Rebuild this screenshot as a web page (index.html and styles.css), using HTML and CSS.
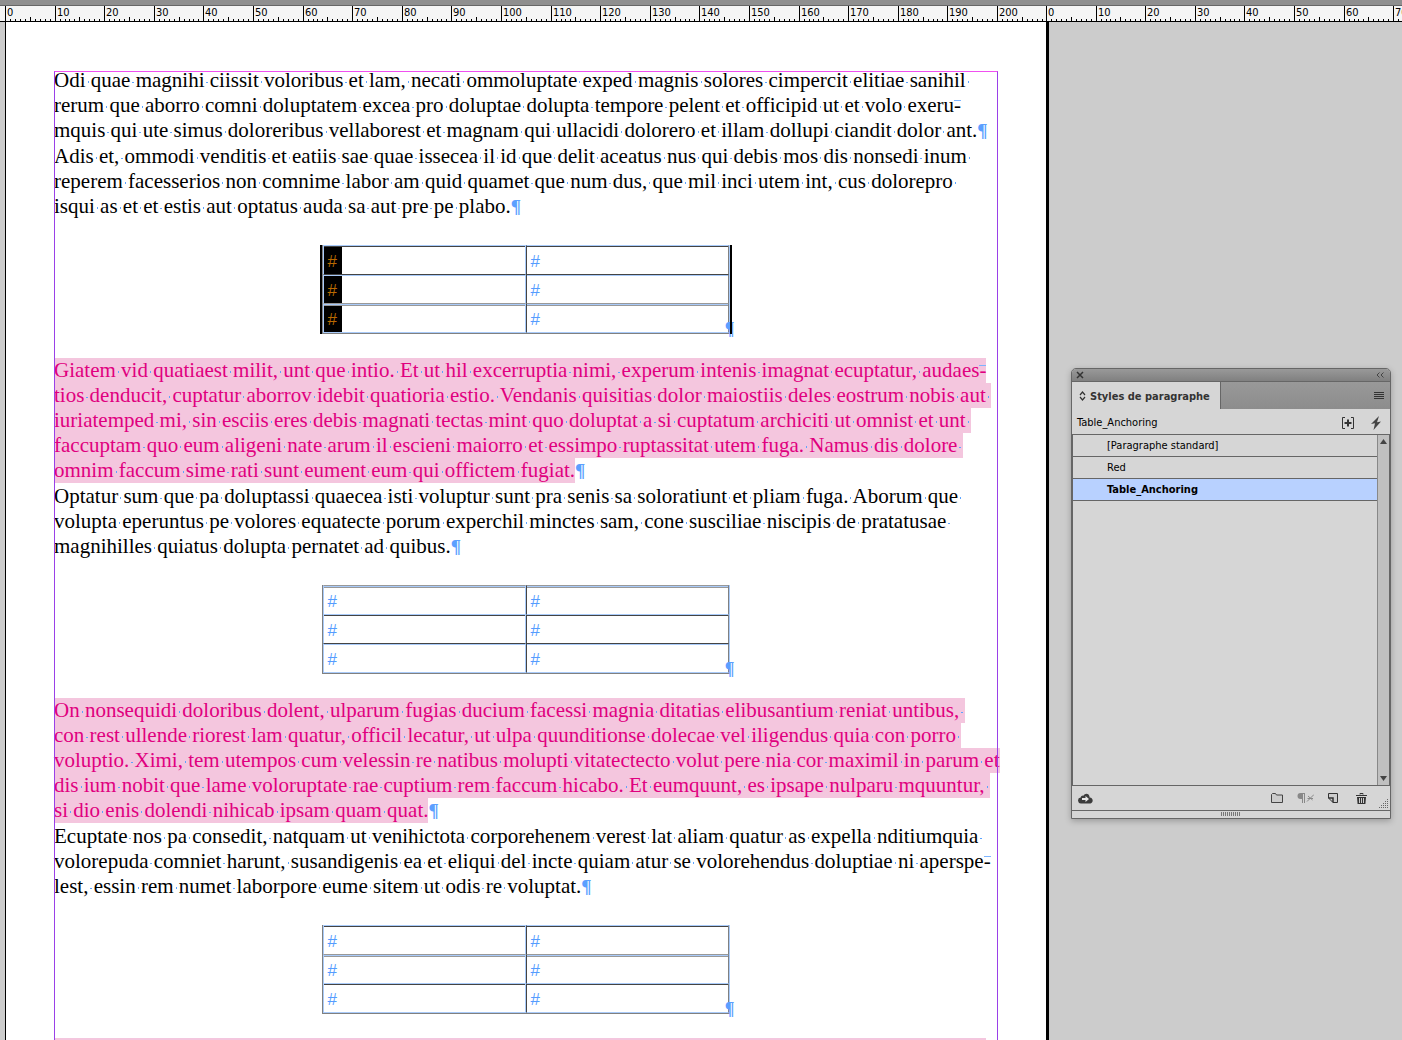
FILE: index.html
```html
<!DOCTYPE html>
<html lang="fr">
<head>
<meta charset="utf-8">
<title>Styles de paragraphe</title>
<link rel="stylesheet" href="styles.css">
</head>
<body>
<header class="ruler"><svg id="ruler" class="ruler-scale" role="img" aria-label="Horizontal ruler"></svg></header>
<main class="workspace">
<article class="page">
<div class="frame">
<div class="story">
<p>Odi quae magnihi ciissit voloribus et lam, necati ommoluptate exped magnis solores cimpercit elitiae sanihil 
rerum que aborro comni doluptatem excea pro doluptae dolupta tempore pelent et officipid ut et volo exeru<span class="hyphen">-</span>
mquis qui ute simus doloreribus vellaborest et magnam qui ullacidi dolorero et illam dollupi ciandit dolor ant.<span class="pilcrow">¶</span></p>
<p>Adis et, ommodi venditis et eatiis sae quae issecea il id que delit aceatus nus qui debis mos dis nonsedi inum 
reperem facesserios non comnime labor am quid quamet que num dus, que mil inci utem int, cus dolorepro 
isqui as et et estis aut optatus auda sa aut pre pe plabo.<span class="pilcrow">¶</span></p>
<div class="anchor selected">
<table class="grid">
<tr class="rule-blue"><td><span class="mark">#</span></td><td><span class="mark">#</span></td></tr>
<tr class="rule-dark"><td><span class="mark">#</span></td><td><span class="mark">#</span></td></tr>
<tr class="rule-soft"><td><span class="mark">#</span></td><td><span class="mark">#</span></td></tr>
</table><span class="table-end">¶</span>
</div>
<p class="red"><span class="tint">Giatem vid quatiaest milit, unt que intio. Et ut hil excerruptia nimi, experum intenis imagnat ecuptatur, audaes<span class="hyphen">-</span>
tios denducit, cuptatur aborrov idebit quatioria estio. Vendanis quisitias dolor maiostiis deles eostrum nobis aut 
iuriatemped mi, sin esciis eres debis magnati tectas mint quo doluptat a si cuptatum archiciti ut omnist et unt 
faccuptam quo eum aligeni nate arum il escieni maiorro et essimpo ruptassitat utem fuga. Namus dis dolore 
omnim faccum sime rati sunt eument eum qui offictem fugiat.</span><span class="pilcrow">¶</span></p>
<p>Optatur sum que pa doluptassi quaecea isti voluptur sunt pra senis sa soloratiunt et pliam fuga. Aborum que 
volupta eperuntus pe volores equatecte porum experchil minctes sam, cone susciliae niscipis de pratatusae 
magnihilles quiatus dolupta pernatet ad quibus.<span class="pilcrow">¶</span></p>
<div class="anchor">
<table class="grid">
<tr class="rule-soft"><td><span class="mark">#</span></td><td><span class="mark">#</span></td></tr>
<tr class="rule-blue"><td><span class="mark">#</span></td><td><span class="mark">#</span></td></tr>
<tr class="rule-dark"><td><span class="mark">#</span></td><td><span class="mark">#</span></td></tr>
</table><span class="table-end">¶</span>
</div>
<p class="red"><span class="tint">On nonsequidi doloribus dolent, ulparum fugias ducium facessi magnia ditatias elibusantium reniat untibus, 
con rest ullende riorest lam quatur, officil lecatur, ut ulpa quunditionse dolecae vel iligendus quia con porro 
voluptio. Ximi, tem utempos cum velessin re natibus molupti vitatectecto volut pere nia cor maximil in parum et
dis ium nobit que lame voloruptate rae cuptium rem faccum hicabo. Et eumquunt, es ipsape nulparu mquuntur, 
si dio enis dolendi nihicab ipsam quam quat.</span><span class="pilcrow">¶</span></p>
<p>Ecuptate nos pa consedit, natquam ut venihictota corporehenem verest lat aliam quatur as expella nditiumquia 
volorepuda comniet harunt, susandigenis ea et eliqui del incte quiam atur se volorehendus doluptiae ni aperspe<span class="hyphen">-</span>
lest, essin rem numet laborpore eume sitem ut odis re voluptat.<span class="pilcrow">¶</span></p>
<div class="anchor">
<table class="grid">
<tr class="rule-blue"><td><span class="mark">#</span></td><td><span class="mark">#</span></td></tr>
<tr class="rule-soft"><td><span class="mark">#</span></td><td><span class="mark">#</span></td></tr>
<tr class="rule-blue"><td><span class="mark">#</span></td><td><span class="mark">#</span></td></tr>
</table><span class="table-end">¶</span>
</div>
<div class="next-paragraph"></div>
</div>
</div>
</article>
<aside class="pasteboard">
<section class="panel" aria-label="Styles de paragraphe">
<div class="titlebar">
<button class="icon" aria-label="Fermer"><svg width="8" height="8" viewBox="0 0 8 8"><path d="M1 1l6 6M7 1l-6 6" stroke="#333" stroke-width="1.5"/></svg></button>
<button class="icon" aria-label="Réduire"><svg width="8" height="6" viewBox="0 0 8 6"><path d="M3.500.5L1 3l2.500 2.500M7.500.5L5 3l2.500 2.500" fill="none" stroke="#444"/></svg></button>
</div>
<div class="tabs">
<button class="tab"><svg width="7" height="10" viewBox="0 0 7 10"><path d="M1 4l2.500-3L6 4M1 6l2.500 3L6 6" fill="none" stroke="#333" stroke-width="1.200"/></svg>Styles de paragraphe</button>
<button class="icon" aria-label="Menu du panneau"><svg width="10" height="7" viewBox="0 0 10 7" shape-rendering="crispEdges"><path d="M0 .5h10M0 2.500h10M0 4.500h10M0 6.500h10" stroke="#333"/></svg></button>
</div>
<div class="current">
<span>Table_Anchoring</span>
<div class="tools">
<button class="icon" aria-label="Effacer les remplacements"><svg width="12" height="12" viewBox="0 0 12 12"><path d="M3 .5H.5v11H3M9 .5h2.500v11H9" fill="none" stroke="#333"/><path d="M6 2.500v7M2.500 6h7" stroke="#333" stroke-width="2"/></svg></button>
<button class="icon" aria-label="Application rapide"><svg width="10" height="14" viewBox="0 0 10 14"><path d="M8 0L0 8l4-.8L2.500 14 10 5.500 6 6.300z" fill="#444"/></svg></button>
</div>
</div>
<div class="list">
<ul class="styles">
<li><button>[Paragraphe standard]</button></li>
<li><button>Red</button></li>
<li><button class="active">Table_Anchoring</button></li>
</ul>
<div class="scrollbar">
<svg width="7" height="5" viewBox="0 0 7 5"><path d="M0 5l3.500-5L7 5z" fill="#444"/></svg>
<svg width="7" height="5" viewBox="0 0 7 5"><path d="M0 0l3.500 5L7 0z" fill="#444"/></svg>
</div>
</div>
<div class="footer">
<button class="icon" aria-label="Bibliothèque"><svg width="15" height="11" viewBox="0 0 15 11"><path d="M3.500 10.500a3 3 0 0 1-.8-6C3 3 4.500 2.300 5.500 2.700 6.500.3 10.500-.2 11.300 3c.4.8.2 1.300.2 1.500 3.500-.3 4.500 5 1 6z" fill="#3c3c3c"/><path d="M4 5h3.500V3L11 6 7.500 9V7H4z" fill="#e8e8e8"/></svg></button>
<div class="actions">
<button class="icon" aria-label="Nouveau groupe"><svg width="12" height="10" viewBox="0 0 12 10"><path d="M.5 9.500v-8L1.500.5h3l1 1.500h6v7.500z" fill="#ccc" stroke="#444"/></svg></button>
<button class="icon" aria-label="Effacer"><svg width="17" height="11" viewBox="0 0 17 11"><path d="M3.500 0H8v10H7V1H6v9H5V6H3.500a3 3 0 0 1 0-6z" fill="#888"/><path d="M10 8.500l7-7M11 3l4.500 4M10.500 5.500h5.500" stroke="#888"/></svg></button>
<button class="icon" aria-label="Nouveau style"><svg width="14" height="10" viewBox="0 0 14 10"><path d="M.5 5V.5h9v9H5z" fill="#ccc" stroke="#333"/><path d="M.5 5H5v4.500" fill="none" stroke="#333" stroke-width="1.500"/></svg></button>
<button class="icon" aria-label="Supprimer"><svg width="11" height="11" viewBox="0 0 11 11"><path d="M4 1.500V.5h3v1M0 2.500h11" fill="none" stroke="#333"/><path d="M1 4h9l-.6 7H1.600z" fill="#333"/><path d="M3.500 5v5M5.500 5v5M7.500 5v5" stroke="#ccc"/></svg></button>
</div>
<svg class="resize" width="10" height="10" viewBox="0 0 10 10" shape-rendering="crispEdges"><path d="M0 9.500h10M2 7.500h8M4 5.500h6M6 3.500h4M8 1.500h2" stroke="#666" stroke-dasharray="1 1"/></svg>
</div>
<div class="grip"><svg width="20" height="4" viewBox="0 0 20 4" shape-rendering="crispEdges"><path d="M0 2h20" stroke="#777" stroke-width="4" stroke-dasharray="1 1"/></svg></div>
</section>
</aside>
</main>
<script src="app.js"></script>
</body>
</html>
```
FILE: styles.css
```css
* { box-sizing: border-box; }
html, body { height: 100%; }
body {
  margin: 0;
  display: flex;
  flex-direction: column;
  overflow: hidden;
  background: #ccc;
  font-family: "DejaVu Sans Condensed", "DejaVu Sans", sans-serif;
  font-size: 11px;
  color: #000;
}
button {
  font: inherit;
  color: inherit;
  background: none;
  border: 0;
  padding: 0;
}
svg { display: block; }

.ruler {
  flex: none;
  height: 22px;
  border-top: 5px solid #8f8f8f;
  background: #f5f5f5;
}
.ruler-scale { width: 100%; height: 17px; }
.ruler-scale line { stroke: #000; shape-rendering: crispEdges; }
.ruler-scale .edge { stroke: #666; }

.workspace {
  flex: 1;
  min-height: 0;
  display: flex;
  padding-left: 5px;
}
.page {
  flex: none;
  width: 1044px;
  padding: 49px 50px 0 48px;
  background: #fff;
  border-left: 1px solid #000;
  border-right: 3px solid #000;
  overflow: hidden;
}
.frame {
  position: relative;
  width: 944px;
  padding: 1px;
}
/* The frame edge is drawn over the text and its highlight. */
.frame::after {
  content: "";
  position: absolute;
  inset: 0;
  border: 1px solid #9a40e8;
  border-top-color: #f050f0;
  pointer-events: none;
}
.story {
  margin: -4px 0 0 -1px;
  font-family: "Liberation Serif", serif;
  font-size: 21px;
  line-height: 25px;
}
.story p { margin: 0 0 1px; white-space: pre; }
.red { color: #e0007f; }
.tint { background: #f4c6de; box-shadow: 0 1px #f4c6de; }
.space { background: radial-gradient(circle at 50% 60%, #5ca4ff 0, #5ca4ff 1px, transparent 1px); }
.pilcrow { font-size: 19px; line-height: 19px; font-weight: bold; color: #5c9fff; }
.hyphen { position: relative; }
.hyphen::before {
  content: "";
  position: absolute;
  left: 0;
  top: 7px;
  width: 7px;
  height: 1px;
  background: #7db4ff;
}
.next-paragraph { width: 932px; height: 25px; background: #f4c6de; }

.anchor {
  position: relative;
  width: 408px;
  margin: 26px auto 24px;
}
.grid {
  width: 100%;
  table-layout: fixed;
  border-spacing: 0;
  border: 1px solid #808080;
  border-right-color: #a9cbfa;
  border-top: 0;
  font-family: "Liberation Sans", sans-serif;
  font-size: 17px;
  line-height: 25px;
  color: #559cff;
}
.grid td {
  height: 29px;
  padding: 3px 0 0 4px;
  border-left: 1px solid #a9cbfa;
  border-right: 1px solid #a9cbfa;
}
.grid td + td { border-left-color: #444; border-right-color: #808080; }
.rule-blue td { border-top: 1px solid #a9cbfa; box-shadow: inset 0 1px #444; }
.rule-dark td { border-top: 1px solid #444; box-shadow: inset 0 1px #a9cbfa; }
.rule-soft td { border-top: 1px solid #999; box-shadow: inset 0 1px #a9cbfa, inset 0 2px #999; }
.grid tr:last-child td { height: 30px; border-bottom: 1px solid #a9cbfa; }
.table-end {
  position: absolute;
  right: -5px;
  bottom: -8px;
  font-size: 18px;
  font-weight: bold;
  color: #5c9fff;
}
.selected::before, .selected::after {
  content: "";
  position: absolute;
  top: 0;
  bottom: 0;
  width: 2px;
  left: -2px;
  background: #000;
}
.selected::after { left: auto; right: -2px; }
.selected td:first-child {
  background: linear-gradient(#000, #000) 0 0 / 18px 100% no-repeat;
}
.selected td:first-child .mark { color: #b96a00; }

.pasteboard { flex: 1; padding: 346px 11px 0 22px; }
.panel {
  border: 1px solid #666;
  border-radius: 5px 5px 0 0;
  background: #d6d6d6;
  box-shadow: 0 2px 6px rgba(0, 0, 0, .25);
}
.titlebar {
  display: flex;
  justify-content: space-between;
  align-items: center;
  height: 13px;
  padding: 0 6px 0 4px;
  border-radius: 4px 4px 0 0;
  border-bottom: 1px solid #666;
  background: linear-gradient(#999, #808080);
}
.tabs {
  display: flex;
  justify-content: space-between;
  align-items: center;
  height: 27px;
  padding-right: 6px;
  background: linear-gradient(#999, #8c8c8c);
}
.tab {
  display: flex;
  align-items: center;
  gap: 4px;
  height: 27px;
  padding: 1px 10px 0 7px;
  border-right: 1px solid #666;
  background: #d6d6d6;
  color: #333;
  font-weight: bold;
}
.current {
  display: flex;
  justify-content: space-between;
  align-items: center;
  height: 25px;
  padding: 2px 9px 0 5px;
}
.tools { display: flex; align-items: center; gap: 17px; }
.list {
  display: flex;
  height: 352px;
  border: 1px solid #666;
}
.styles { flex: 1; margin: 0; padding: 0; list-style: none; }
.styles button {
  display: block;
  width: 100%;
  height: 22px;
  padding-left: 34px;
  border-bottom: 1px solid #666;
  text-align: left;
}
.styles .active { background: #b8d1ff; font-weight: bold; }
.scrollbar {
  display: flex;
  flex-direction: column;
  justify-content: space-between;
  align-items: center;
  width: 12px;
  padding: 4px 0;
  border-left: 1px solid #888;
  background: #c0c0c0;
}
.footer {
  display: flex;
  align-items: center;
  justify-content: space-between;
  height: 25px;
  padding: 0 1px 0 6px;
  border-bottom: 1px solid #666;
}
.actions { display: flex; align-items: center; gap: 14px; margin-left: auto; margin-right: 12px; }
.resize { align-self: flex-end; margin-bottom: 2px; }
.grip { display: flex; justify-content: center; padding: 1px 0 2px; }
```
FILE: app.js
```js
// Horizontal ruler in millimetres; the scale restarts at the second page.
const MM = 4.96;
const svg = document.getElementById("ruler");
const NS = "http://www.w3.org/2000/svg";

function line(x1, y1, x2, y2, cls) {
  const el = document.createElementNS(NS, "line");
  el.setAttribute("x1", x1);
  el.setAttribute("y1", y1);
  el.setAttribute("x2", x2);
  el.setAttribute("y2", y2);
  if (cls) el.setAttribute("class", cls);
  svg.append(el);
}

function scale(origin, from, to) {
  for (let mm = from; mm <= to; mm++) {
    const x = Math.round(origin + mm * MM) + 0.5;
    const top = mm % 10 === 0 ? 1 : mm % 5 === 0 ? 12 : 14;
    line(x, top, x, 17);
    if (mm % 10 === 0) {
      const label = document.createElementNS(NS, "text");
      label.setAttribute("x", x + 1.5);
      label.setAttribute("y", 11);
      label.textContent = mm;
      svg.append(label);
    }
  }
}

const width = document.documentElement.clientWidth;
line(0, 0.5, width, 0.5, "edge");
line(0, 16.5, width, 16.5);
scale(5, 0, 209);
scale(1046, 0, Math.floor((width - 1046) / MM));

// Show a dot on every space of the story.
document.querySelectorAll(".story p").forEach(function (p) {
  const walker = document.createTreeWalker(p, NodeFilter.SHOW_TEXT);
  const nodes = [];
  while (walker.nextNode()) nodes.push(walker.currentNode);
  nodes.forEach(function (node) {
    const parts = node.data.split(/( )/).map(function (part) {
      if (part !== " ") return part;
      const space = document.createElement("span");
      space.className = "space";
      space.textContent = part;
      return space;
    });
    node.replaceWith(...parts);
  });
});
```
